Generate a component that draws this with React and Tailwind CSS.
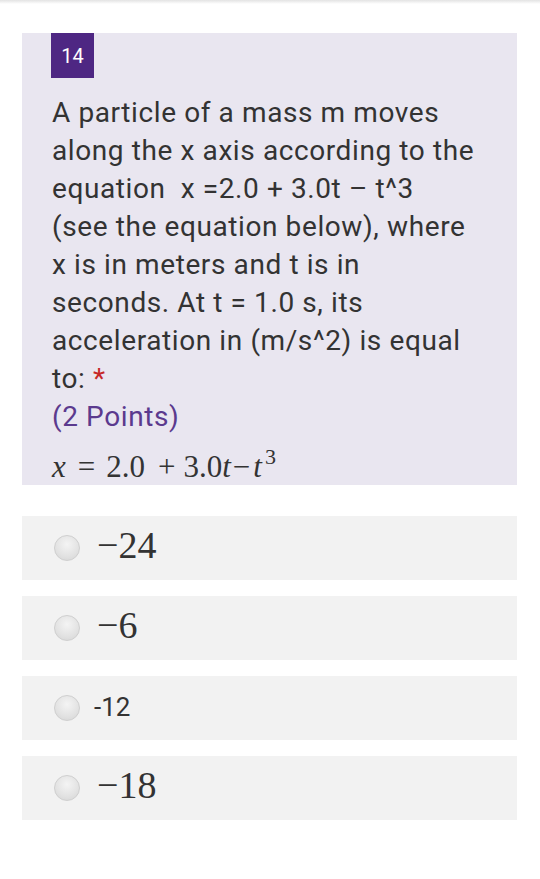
import React from "react";

const sans = { fontFamily: "Roboto, 'Liberation Sans', sans-serif" };
const serif = { fontFamily: "'Liberation Serif', 'Times New Roman', serif" };

function Radio() {
  return (
    <div className="w-[26px] h-[26px] rounded-full border border-[#cfcfcf] bg-[radial-gradient(circle_at_50%_35%,#f4f4f4_0%,#e2e2e2_60%,#d4d4d4_100%)] shrink-0" />
  );
}

function Option({ children }) {
  return (
    <div className="h-[64px] w-[495px] bg-[#f2f2f2] flex items-center pl-[32px]">
      <Radio />
      {children}
    </div>
  );
}

const lines = [
  "A particle of a mass m moves",
  "along the x axis according to the",
  "equation\u00a0 x =2.0 + 3.0t \u2013 t^3",
  "(see the equation below), where",
  "x is in meters and t is in",
  "seconds. At t = 1.0 s, its",
  "acceleration in (m/s^2) is equal",
];

export default function App() {
  return (
    <div className="min-h-[879px] w-[540px] bg-white" style={sans}>
      <div className="h-[4px] bg-gradient-to-b from-[#e3e3e3] to-white" />
      <div className="ml-[22px] mt-[29px] w-[495px] bg-[#e9e6f0] pl-[30px] pr-[20px] pb-[1px]">
        <div className="w-[43px] h-[45px] -ml-[1px] bg-[#4e2783] flex items-center justify-center text-white text-[20px]">
          14
        </div>
        <div className="mt-[16px] text-[28px] tracking-[0.6px] leading-[38px] text-[#333333] whitespace-nowrap">
          {lines.map((l) => (
            <div key={l}>{l}</div>
          ))}
          <div>
            to: <span className="text-[#c62828]">*</span>
          </div>
        </div>
        <div className="text-[28px] tracking-[0.6px] leading-[38px] text-[#5b3a8e]">(2 Points)</div>
        <div className="mt-[14px] h-[34px] flex items-baseline text-[31px] leading-[34px] text-[#333333] whitespace-nowrap" style={serif}>
          <i>x</i>
          <span className="ml-[12px]">=</span>
          <span className="ml-[11px]">2.0</span>
          <span className="ml-[13px]">+</span>
          <span className="ml-[8px]">3.0</span>
          <i>t</i>
          <span className="ml-[2px]">−</span>
          <i className="ml-[3px]">t</i>
          <span className="text-[22px] relative -top-[13px] ml-[3px]">3</span>
        </div>
      </div>
      <div className="ml-[22px] mt-[31px] flex flex-col gap-[16px]">
        <Option>
          <span className="ml-[17px] text-[38px] leading-none text-[#333333] -mt-[6px]" style={serif}>−24</span>
        </Option>
        <Option>
          <span className="ml-[17px] text-[38px] leading-none text-[#333333] -mt-[6px]" style={serif}>−6</span>
        </Option>
        <Option>
          <span className="ml-[14px] text-[26px] leading-none text-[#333333] -mt-[2px]">-12</span>
        </Option>
        <Option>
          <span className="ml-[17px] text-[38px] leading-none text-[#333333] -mt-[6px]" style={serif}>−18</span>
        </Option>
      </div>
    </div>
  );
}
